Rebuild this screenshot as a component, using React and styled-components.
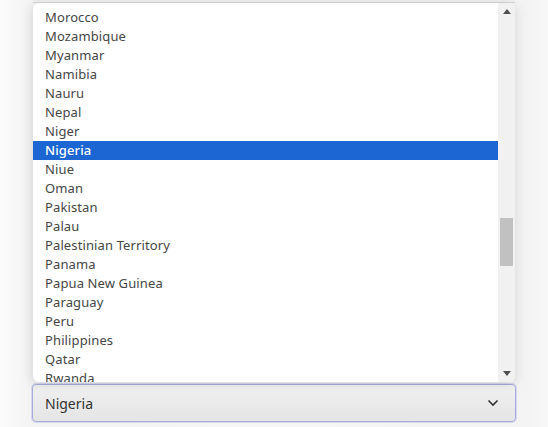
import React from "react";
import styled, { createGlobalStyle } from "styled-components";

const Global = createGlobalStyle`
  html, body { margin: 0; padding: 0; }
  body {
    background: linear-gradient(90deg, #fbfbfb 0%, #f3f3f3 6%, #f6f6f6 50%, #f3f3f3 96%, #f8f8f8 100%);
    font-family: "Noto Sans", "Open Sans", sans-serif;
    width: 548px;
    height: 427px;
    overflow: hidden;
  }
`;

const Page = styled.div`
  position: relative;
  width: 548px;
  height: 427px;
  box-sizing: border-box;
  padding: 3px 0 0 33px;
  display: flex;
  flex-direction: column;
  gap: 2px;
`;

const TopEdge = styled.div`
  position: absolute;
  left: 33px;
  top: 0;
  width: 482px;
  height: 2px;
  border-bottom: 1px solid #d6d6d6;
  background: #eeeeee;
`;

const Popup = styled.div`
  width: 482px;
  height: 379px;
  background: #ffffff;
  border-radius: 6px;
  overflow: hidden;
  display: flex;
  box-shadow: -4px 2px 10px rgba(0, 0, 0, 0.08), 4px 2px 10px rgba(0, 0, 0, 0.06);
  position: relative;
  z-index: 1;
`;

const List = styled.ul`
  flex: 1;
  margin: 0;
  padding: 5px 0 0;
  list-style: none;
  overflow: hidden;
`;

const Option = styled.li`
  height: 19px;
  line-height: 19px;
  padding-left: 12px;
  font-size: 13px;
  letter-spacing: 0.12px;
  color: ${(p) => (p.$selected ? "#ffffff" : "#464646")};
  background: ${(p) => (p.$selected ? "#1b66d3" : "transparent")};
  font-weight: ${(p) => (p.$selected ? 500 : 400)};
  white-space: nowrap;
`;

const Scrollbar = styled.div`
  width: 17px;
  background: #f1f1f1;
  display: flex;
  flex-direction: column;
  align-items: center;
`;

const Arrow = styled.div`
  height: 17px;
  width: 17px;
  display: flex;
  align-items: center;
  justify-content: center;
`;

const Track = styled.div`
  flex: 1;
  width: 100%;
  position: relative;
`;

const Thumb = styled.div`
  position: absolute;
  left: 2px;
  right: 2px;
  background: #c1c1c1;
`;

const SelectBox = styled.div`
  width: 484px;
  height: 38px;
  margin-left: -1px;
  box-sizing: border-box;
  border: 1px solid #a6abdc;
  box-shadow: 0 0 0 1px rgba(170, 176, 226, 0.4);
  border-radius: 4px;
  background: linear-gradient(180deg, #f0f0f0 0%, #e5e5e5 100%);
  display: flex;
  align-items: center;
  justify-content: space-between;
  padding: 0 16px 0 12px;
  font-size: 14px;
  color: #333333;
`;

const countries = [
  "Morocco",
  "Mozambique",
  "Myanmar",
  "Namibia",
  "Nauru",
  "Nepal",
  "Niger",
  "Nigeria",
  "Niue",
  "Oman",
  "Pakistan",
  "Palau",
  "Palestinian Territory",
  "Panama",
  "Papua New Guinea",
  "Paraguay",
  "Peru",
  "Philippines",
  "Qatar",
  "Rwanda",
];

export default function App() {
  return (
    <>
      <Global />
      <Page>
        <TopEdge />
        <Popup>
          <List>
            {countries.map((c) => (
              <Option key={c} $selected={c === "Nigeria"}>
                {c}
              </Option>
            ))}
          </List>
          <Scrollbar>
            <Arrow>
              <svg width="8" height="5" viewBox="0 0 8 5">
                <path d="M0 5 L4 0 L8 5 Z" fill="#505050" />
              </svg>
            </Arrow>
            <Track>
              <Thumb style={{ top: 198, height: 48 }} />
            </Track>
            <Arrow>
              <svg width="8" height="5" viewBox="0 0 8 5">
                <path d="M0 0 L4 5 L8 0 Z" fill="#505050" />
              </svg>
            </Arrow>
          </Scrollbar>
        </Popup>
        <SelectBox>
          <span>Nigeria</span>
          <svg width="12" height="8" viewBox="0 0 12 8">
            <path d="M1.5 1.5 L6 6 L10.5 1.5" fill="none" stroke="#333" strokeWidth="1.6" />
          </svg>
        </SelectBox>
      </Page>
    </>
  );
}
